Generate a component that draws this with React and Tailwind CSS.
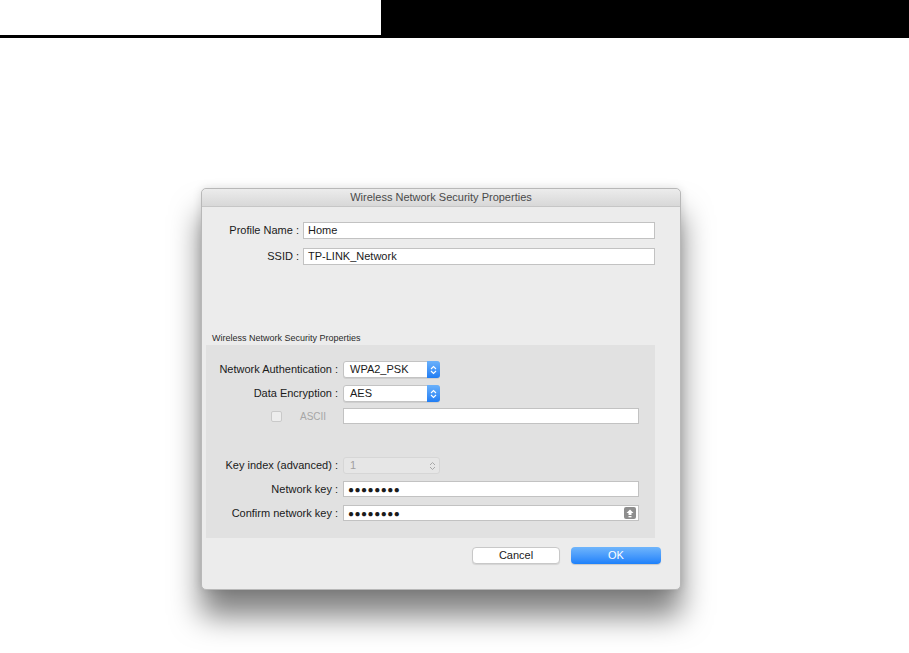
import React from "react";

const font = { fontFamily: '"Liberation Sans", Arial, sans-serif' };

function Stepper({ disabled }) {
  if (disabled) {
    return (
      <div className="flex h-full w-[13px] items-center justify-center">
        <svg width="7" height="10" viewBox="0 0 7 10">
          <path d="M1 4 L3.5 1.5 L6 4 M1 6 L3.5 8.5 L6 6" fill="none" stroke="#a8a8a8" strokeWidth="1" />
        </svg>
      </div>
    );
  }
  return (
    <div className="flex h-[calc(100%+2px)] -my-px -mr-px w-[13px] items-center justify-center rounded-r-[3px] bg-gradient-to-b from-[#6ab1fb] to-[#1f7df4]">
      <svg width="7" height="10" viewBox="0 0 7 10">
        <path d="M1 4 L3.5 1.5 L6 4 M1 6 L3.5 8.5 L6 6" fill="none" stroke="#ffffff" strokeWidth="1.1" />
      </svg>
    </div>
  );
}

function Popup({ value, disabled }) {
  return (
    <div
      className={
        "flex h-[17px] w-[97px] items-center rounded-[3px] border " +
        (disabled
          ? "border-[#d6d6d6] bg-[#e6e6e6] text-[#a0a0a0]"
          : "border-[#c3c3c3] bg-white text-[#1a1a1a] shadow-[0_1px_0_rgba(0,0,0,0.08)]")
      }
    >
      <span className="flex-1 pl-[6px] text-[11px] leading-none">{value}</span>
      <Stepper disabled={disabled} />
    </div>
  );
}

function Field({ value, width = "w-[296px]", children, h = "h-[16px]" }) {
  return (
    <div className={`flex ${h} ${width} items-center border border-[#c2c2c2] bg-white pl-[4px] text-[11px] leading-none text-[#1a1a1a]`}>
      <span className="flex-1">{value}</span>
      {children}
    </div>
  );
}

function Dots() {
  return <span className="text-[10px] tracking-[0.5px]">●●●●●●●●</span>;
}

function Label({ children }) {
  return <div className="flex items-center justify-end text-[11px] leading-none text-[#1a1a1a]">{children}</div>;
}

export default function App() {
  return (
    <div className="min-h-[653px] w-[909px] bg-white" style={font}>
      <div className="flex h-[38px]">
        <div className="w-[381px] border-b-[3px] border-black bg-white" />
        <div className="flex-1 bg-black" />
      </div>

      <div className="ml-[201px] mt-[150px] flex h-[402px] w-[480px] flex-col rounded-[5px] border border-[#b8b8b8] bg-[#ececec] shadow-[0_26px_30px_rgba(0,0,0,0.5),0_0_10px_rgba(0,0,0,0.12)]">
        <div className="flex h-[18px] items-center justify-center rounded-t-[5px] border-b border-[#c6c6c6] bg-gradient-to-b from-[#ececec] to-[#d8d8d8] text-[11px] text-[#4a4a4a]">
          Wireless Network Security Properties
        </div>

        <div className="mt-[15px] grid grid-cols-[97px_352px] gap-x-[4px] gap-y-[9px]">
          <Label>Profile Name :</Label>
          <Field value="Home" width="w-[352px]" h="h-[17px]" />
          <Label>SSID :</Label>
          <Field value="TP-LINK_Network" width="w-[352px]" h="h-[17px]" />
        </div>

        <div className="ml-[10px] mt-[67px] h-[12px] text-[9px] leading-[12px] text-[#2a2a2a]">
          Wireless Network Security Properties
        </div>

        <div className="ml-[4px] mt-[1px] w-[449px] bg-[#e1e1e1] pb-[17px] pt-[16px]">
          <div className="grid grid-cols-[132px_300px] gap-x-[5px]">
            <Label>Network Authentication :</Label>
            <Popup value="WPA2_PSK" />
            <div className="col-span-2 h-[7px]" />
            <Label>Data Encryption :</Label>
            <Popup value="AES" />
            <div className="col-span-2 h-[6px]" />
            <div className="flex items-center pl-[65px]">
              <div className="h-[11px] w-[11px] rounded-[2px] border border-[#c9c9c9] bg-[#ededed]" />
              <span className="ml-[18px] text-[10px] text-[#a6a6a6]">ASCII</span>
            </div>
            <Field value="" />
            <div className="col-span-2 h-[33px]" />
            <Label>Key index (advanced) :</Label>
            <Popup value="1" disabled />
            <div className="col-span-2 h-[7px]" />
            <Label>Network key :</Label>
            <Field value={<Dots />} />
            <div className="col-span-2 h-[8px]" />
            <Label>Confirm network key :</Label>
            <Field value={<Dots />}>
              <div className="mr-[2px] flex h-[12px] w-[12px] items-center justify-center rounded-[2px] bg-[#8e8e8e]">
                <svg width="8" height="9" viewBox="0 0 8 9">
                  <path d="M4 0.5 L7.5 4 L5.5 4 L5.5 6 L2.5 6 L2.5 4 L0.5 4 Z" fill="#ffffff" />
                  <rect x="2.5" y="7" width="3" height="1.3" fill="#ffffff" />
                </svg>
              </div>
            </Field>
          </div>
        </div>

        <div className="mt-[9px] flex justify-end gap-[11px] pr-[19px]">
          <div className="flex h-[17px] w-[88px] items-center justify-center rounded-[4px] border border-[#c8c8c8] bg-white text-[11px] leading-none text-[#1a1a1a] shadow-[0_1px_1px_rgba(0,0,0,0.1)]">
            Cancel
          </div>
          <div className="flex h-[17px] w-[90px] items-center justify-center rounded-[4px] bg-gradient-to-b from-[#6fb5fb] to-[#1b80fa] text-[11px] leading-none text-white shadow-[0_1px_1px_rgba(0,0,0,0.15)]">
            OK
          </div>
        </div>
      </div>
    </div>
  );
}
